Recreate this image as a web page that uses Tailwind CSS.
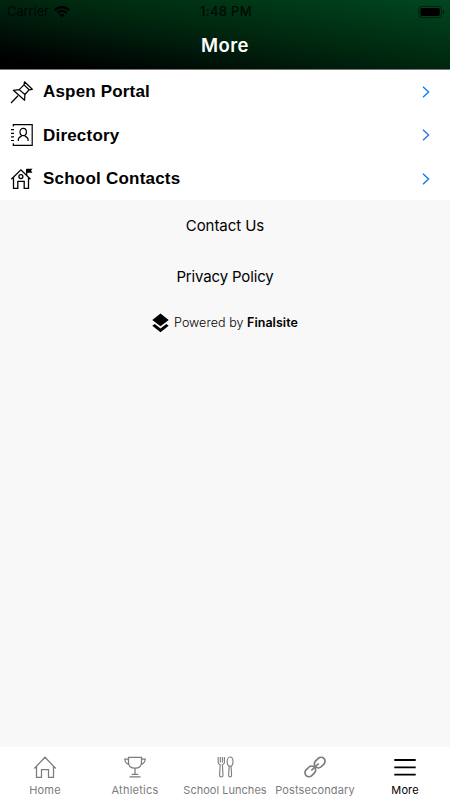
<!DOCTYPE html>
<html lang="en">
<head>
  <meta charset="utf-8" />
  <title>More</title>
  <script src="https://cdn.jsdelivr.net/npm/@tailwindcss/browser@4"></script>
</head>
<body class="flex h-[800px] w-[450px] flex-col overflow-hidden bg-[#f8f8f8] font-['Inter','Liberation_Sans',sans-serif] text-black">
  <header class="h-[70px] shrink-0 border-b border-[#777] bg-[linear-gradient(9deg,#000_8%,#001d0c_40%,#00290f_55%,#004720_100%)]">
    <!-- status bar -->
    <div class="grid h-[23px] grid-cols-3 items-center pl-[7px] pr-[5px] text-[13px] leading-[23px]">
      <div class="flex items-center gap-[5px] text-black/80">
        <span class="tracking-[-0.1px]">Carrier</span>
        <svg class="h-3 w-4" viewBox="0 0 16 12" fill="none" stroke="#000" stroke-width="2.2">
          <path d="M.8 4.3Q8-2.2 15.2 4.3M3.3 7Q8 2.8 12.7 7" />
          <path d="M5.3 8.8Q8 6.5 10.7 8.8L8 11.5z" fill="#000" stroke="none" />
        </svg>
      </div>
      <span class="text-center font-medium tracking-[0.3px] text-black/80">1:48 PM</span>
      <svg class="h-3 w-[27px] justify-self-end" viewBox="0 0 27 12">
        <rect x=".9" y=".5" width="22.5" height="11" rx="3" fill="none" stroke="#000" stroke-opacity=".5" />
        <rect x="2.5" y="2" width="19.3" height="8" rx="1.4" />
        <path d="M25 4v4q1.5-.6 1.5-2T25 4" fill-opacity=".6" />
      </svg>
    </div>
    <h1 class="pt-[8px] text-center text-[18.5px] font-semibold leading-7 tracking-[0.4px] text-white">More</h1>
  </header>

  <ul class="h-[130px] shrink-0 bg-white font-['Liberation_Sans',sans-serif] text-[17px] font-bold">
    <li class="flex h-[43.5px] items-center pl-[10px] pr-5">
      <svg class="mr-[9px] size-6" viewBox="0 0 24 24" fill="none" stroke="#000" stroke-width="1.25" stroke-linejoin="round">
        <path d="M1 23 8 15.7M14.5 1.8 22.3 9.3 19.1 9.8 14.9 14.5 14.6 20.3 3.3 10.3 9.2 9.6 14 4.9zM14 4.9 19.1 9.8M9.2 9.6 14.9 14.5" />
      </svg>
      <span class="grow tracking-[0.17px]">Aspen Portal</span>
      <svg class="h-3 w-2" viewBox="0 0 8 12" fill="none" stroke="#087aff" stroke-width="1.35"><path d="m1 .7 5.6 5.3L1 11.3" /></svg>
    </li>
    <li class="flex h-[43.5px] items-center pl-[10px] pr-5">
      <svg class="mr-[9px] size-6" viewBox="0 0 24 24" fill="none" stroke="#000" stroke-width="1.2">
        <path d="M3.3 3.5V1.7h18.9v20.6H3.3v-2M1 6.6h3M1 10.3h3M1 13.9h3M1 17.5h3" />
        <ellipse cx="13.2" cy="9" rx="3.2" ry="3.7" />
        <path d="M8.3 18v-1.2q0-2.5 3.4-3.7M18.1 18v-1.2q0-2.5-3.4-3.7" />
      </svg>
      <span class="grow tracking-[0.2px]">Directory</span>
      <svg class="h-3 w-2" viewBox="0 0 8 12" fill="none" stroke="#2b70f5" stroke-width="1.35"><path d="m1 .7 5.6 5.3L1 11.3" /></svg>
    </li>
    <li class="flex h-[43px] items-center pl-[10px] pr-5">
      <svg class="mr-[9px] size-6" viewBox="0 0 24 24" fill="none" stroke="#000" stroke-width="1.3">
        <path d="m1.3 12.3 9.6-9.5 9.6 9.5M3.5 10.5v10.9h4.3v-7h6.4v7h4.3V10.5M16.7 8.2V2.1" />
        <circle cx="10.9" cy="9.6" r="2" />
        <path d="M16.5 1.7h6L21 3.7l1.5 2h-6z" fill="#000" stroke="none" />
      </svg>
      <span class="grow tracking-[0.22px]">School Contacts</span>
      <svg class="h-3 w-2" viewBox="0 0 8 12" fill="none" stroke="#087aff" stroke-width="1.35"><path d="m1 .7 5.6 5.3L1 11.3" /></svg>
    </li>
  </ul>

  <main class="flex grow flex-col items-center text-[15px]">
    <a class="mt-[14px] leading-6 tracking-[-0.05px]">Contact Us</a>
    <a class="mt-[27px] leading-6 tracking-[-0.15px]">Privacy Policy</a>
    <div class="mt-[22px] flex items-center text-[12.5px] leading-6">
      <svg class="mr-[5px] h-5 w-[17px]" viewBox="0 0 17 20">
        <path d="M8.5.5 16.7 7 8.5 13.3.3 7zM.3 12.8l2.4-1.9 5.8 4.5 5.8-4.5 2.4 1.9-8.2 6.5z" />
      </svg>
      <span class="font-light tracking-[0.04px]">Powered by <b class="font-semibold">Finalsite</b></span>
    </div>
  </main>

  <nav class="grid h-[53px] shrink-0 grid-cols-5 bg-white text-[11px] text-[#7b7b80]">
    <a class="flex flex-col items-center pt-2">
      <svg class="size-6" viewBox="0 0 24 24" fill="none" stroke="currentColor" stroke-width="1.25">
        <path d="m1.3 13.5 10.7-11.3 10.7 11.3M3.5 11.3v11h5v-7.6h7v7.6h5v-11" />
      </svg>
      <span class="mt-[3px] leading-4 tracking-[0.2px]">Home</span>
    </a>
    <a class="flex flex-col items-center pt-2">
      <svg class="size-6" viewBox="0 0 24 24" fill="none" stroke="currentColor" stroke-width="1.25">
        <path d="M5.5 2.3h13v5.2q0 5.7-6.5 5.7T5.5 7.5zM5.5 4H1.7q.5 4.5 4.6 5.8M18.5 4h3.8q-.5 4.5-4.6 5.8M12 13.2v6.2M8.7 19.3h6.6M6.5 21.8h11" />
      </svg>
      <span class="mt-[3px] leading-4 tracking-[0.25px]">Athletics</span>
    </a>
    <a class="flex flex-col items-center pt-2">
      <svg class="size-6" viewBox="0 0 24 24" fill="none" stroke="currentColor" stroke-width="1.1">
        <path d="M5.2 2v5.2q0 2.1 2 2.6L6.6 20q0 2 1.7 2t1.7-2L9.4 9.8q2-.5 2-2.6V2M7.3 2v5.5M9.4 2v5.5M16.2 11.1 15.6 20q0 2 1.5 2t1.5-2L18 11.1" />
        <ellipse cx="17.1" cy="6.6" rx="2.9" ry="4.6" />
      </svg>
      <span class="mt-[3px] whitespace-nowrap leading-4 tracking-[0.02px]">School Lunches</span>
    </a>
    <a class="flex flex-col items-center pt-2">
      <svg class="size-6" viewBox="0 0 24 24" fill="none" stroke="currentColor" stroke-width="1.7">
        <rect x="-5.9" y="-4" width="11.8" height="8" rx="4" transform="translate(16.7 7.6) rotate(-45)" />
        <rect x="-5.9" y="-4" width="11.8" height="8" rx="4" transform="translate(7.3 16.4) rotate(-45)" />
        <path d="m8.3 15.5 7.4-7" />
      </svg>
      <span class="mt-[3px] leading-4 tracking-[0.14px]">Postsecondary</span>
    </a>
    <a class="flex flex-col items-center pt-2 text-black">
      <svg class="size-6" viewBox="0 0 24 24" fill="none" stroke="currentColor" stroke-width="1.8">
        <path d="M1.3 5h21.4M1.3 12.3h21.4M1.3 19.6h21.4" />
      </svg>
      <span class="mt-[3px] leading-4 tracking-[0.1px]">More</span>
    </a>
  </nav>
</body>
</html>
